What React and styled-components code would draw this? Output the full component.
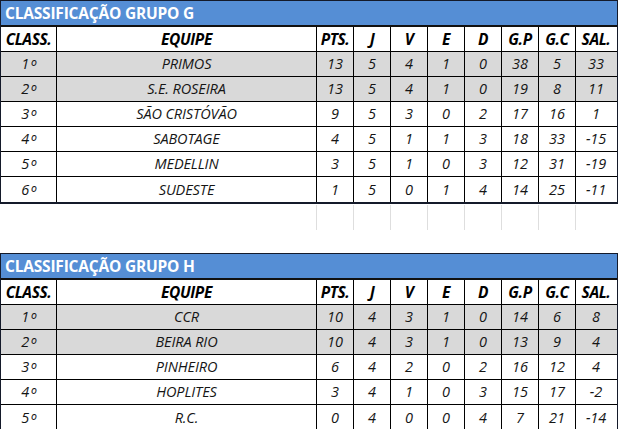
import React from "react";
import styled, { createGlobalStyle } from "styled-components";

const Global = createGlobalStyle`
  html, body { margin: 0; padding: 0; background: #fff; }
  body { font-family: "Open Sans", Lato, sans-serif; }
`;

const COLS = "56px 260px repeat(7, 37px) 40px";

const Page = styled.div`
  width: 619px;
  display: flex;
  flex-direction: column;
`;

const Table = styled.section`
  width: 618px;
  box-sizing: border-box;
  border: 1px solid #141a2a;
  border-bottom-width: 2px;
  margin-top: ${(p) => p.$top || 0}px;
`;

const Title = styled.div`
  height: 24px;
  background: #558ed5;
  color: #fff;
  font-weight: 700;
  font-size: 15.5px;
  line-height: 25px;
  padding-left: 4px;
  border-bottom: 2px solid #111;
  white-space: nowrap;
  letter-spacing: -0.2px;
`;

const Row = styled.div`
  display: grid;
  grid-template-columns: ${COLS};
  height: 25px;
  box-sizing: border-box;
  border-bottom: ${(p) => (p.$last ? "0" : "1px solid #000")};
  background: ${(p) => (p.$shade ? "#d9d9d9" : "#fff")};
`;

const Cell = styled.div`
  display: flex;
  align-items: center;
  justify-content: center;
  line-height: 18px;
  border-right: ${(p) => (p.$end ? "0" : "1px solid #000")};
  font-style: italic;
  font-weight: ${(p) => (p.$head ? 700 : 400)};
  font-size: ${(p) => (p.$head ? "15.5px" : "14.5px")};
  color: ${(p) => (p.$head ? "#000" : "#151515")};
  white-space: nowrap;
  letter-spacing: ${(p) => (p.$head ? "-0.4px" : "-0.1px")};
`;

const Ord = styled.span`
  font-size: 1.2em;
  line-height: 14px;
  margin-left: 1px;
  transform: translateY(2px);
  display: inline-block;
`;

const Spacer = styled.div`
  display: grid;
  grid-template-columns: 1px ${COLS};
  height: 25px;
  margin-top: 1px;
`;

const Grid = styled.div`
  border-right: ${(p) => (p.$line ? "1px solid #dedede" : "0")};
`;

const headers = ["CLASS.", "EQUIPE", "PTS.", "J", "V", "E", "D", "G.P", "G.C", "SAL."];

const groupG = [
  ["PRIMOS", 13, 5, 4, 1, 0, 38, 5, 33],
  ["S.E. ROSEIRA", 13, 5, 4, 1, 0, 19, 8, 11],
  ["SÃO CRISTÓVÃO", 9, 5, 3, 0, 2, 17, 16, 1],
  ["SABOTAGE", 4, 5, 1, 1, 3, 18, 33, -15],
  ["MEDELLIN", 3, 5, 1, 0, 3, 12, 31, -19],
  ["SUDESTE", 1, 5, 0, 1, 4, 14, 25, -11],
];

const groupH = [
  ["CCR", 10, 4, 3, 1, 0, 14, 6, 8],
  ["BEIRA RIO", 10, 4, 3, 1, 0, 13, 9, 4],
  ["PINHEIRO", 6, 4, 2, 0, 2, 16, 12, 4],
  ["HOPLITES", 3, 4, 1, 0, 3, 15, 17, -2],
  ["R.C.", 0, 4, 0, 0, 4, 7, 21, -14],
];

function Standings({ title, rows, top }) {
  return (
    <Table $top={top}>
      <Title>{title}</Title>
      <Row>
        {headers.map((h, i) => (
          <Cell key={h} $head $end={i === headers.length - 1}>
            {h}
          </Cell>
        ))}
      </Row>
      {rows.map((r, ri) => (
        <Row key={ri} $shade={ri < 2} $last={ri === rows.length - 1}>
          <Cell>
            {ri + 1}
            <Ord>º</Ord>
          </Cell>
          {r.map((v, i) => (
            <Cell key={i} $end={i === r.length - 1}>
              {v}
            </Cell>
          ))}
        </Row>
      ))}
    </Table>
  );
}

const spacerLines = [false, false, true, true, true, true, true, true, true, true, false];

export default function App() {
  return (
    <Page>
      <Global />
      <Standings title="CLASSIFICAÇÃO GRUPO G" rows={groupG} />
      <Spacer>
        {spacerLines.map((l, i) => (
          <Grid key={i} $line={l} />
        ))}
      </Spacer>
      <Standings title="CLASSIFICAÇÃO GRUPO H" rows={groupH} top={23} />
    </Page>
  );
}
